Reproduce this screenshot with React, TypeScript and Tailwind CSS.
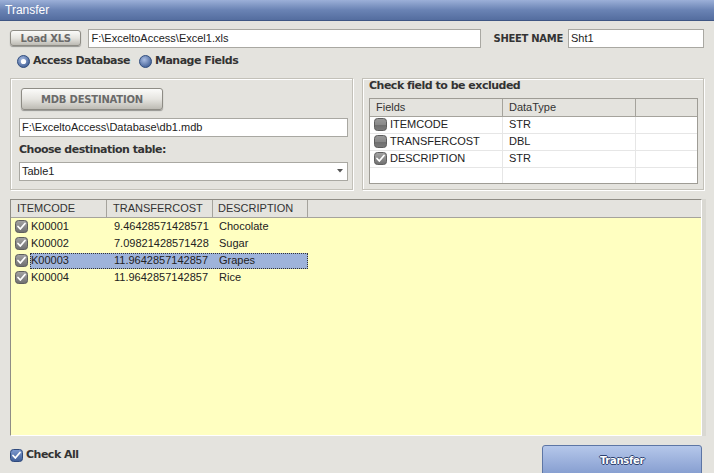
import React from "react";

const FONT = { fontFamily: '"Liberation Sans", Arial, sans-serif' };
const BOLD = { fontFamily: '"DejaVu Sans", Verdana, sans-serif' };

function CheckIcon({ checked, blue }: { checked: boolean; blue?: boolean }) {
  const id = blue ? "cb-blue" : checked ? "cb-gray" : "cb-off";
  return (
    <svg width="13" height="13" viewBox="0 0 13 13" className="shrink-0">
      <defs>
        <linearGradient id={id} x1="0" y1="0" x2="0" y2="1">
          {blue ? (
            <>
              <stop offset="0" stopColor="#7d9ad0" />
              <stop offset="1" stopColor="#3e5d96" />
            </>
          ) : checked ? (
            <>
              <stop offset="0" stopColor="#a4a4a4" />
              <stop offset="1" stopColor="#707070" />
            </>
          ) : (
            <>
              <stop offset="0" stopColor="#9a9a9a" />
              <stop offset="0.5" stopColor="#8a8a8a" />
              <stop offset="0.51" stopColor="#6e6e6e" />
              <stop offset="1" stopColor="#7c7c7c" />
            </>
          )}
        </linearGradient>
      </defs>
      <rect x="0.5" y="0.5" width="12" height="12" rx="3" fill={`url(#${id})`} stroke={blue ? "#2f4a7c" : "#5e5e5e"} strokeWidth="1" />
      {checked && (
        <path d="M3 6.5 L5.3 9 L10 3.5" fill="none" stroke="#ffffff" strokeWidth="1.8" strokeLinecap="round" strokeLinejoin="round" />
      )}
    </svg>
  );
}

function Radio({ on }: { on: boolean }) {
  const id = on ? "rd-on" : "rd-off";
  return (
    <svg width="13" height="13" viewBox="0 0 13 13" className="shrink-0">
      <defs>
        <radialGradient id={id} cx="0.4" cy="0.35" r="0.7">
          <stop offset="0" stopColor="#a9bde3" />
          <stop offset="1" stopColor="#3d5b92" />
        </radialGradient>
      </defs>
      <circle cx="6.5" cy="6.5" r="6" fill={`url(#${id})`} stroke="#34507f" strokeWidth="1" />
      {on && <circle cx="6.5" cy="6.5" r="2.6" fill="#ffffff" />}
    </svg>
  );
}

function GrayButton({ label, className }: { label: string; className: string }) {
  return (
    <div
      className={`flex items-center justify-center whitespace-nowrap rounded-[3px] border border-[#8e8c85] bg-gradient-to-b from-[#fbfbf9] via-[#e6e5e0] to-[#bdbbb4] shadow-[0_1px_1px_rgba(0,0,0,0.35)] text-[10px] font-bold text-[#6a6a6a] tracking-[-0.2px] ${className}`}
      style={BOLD}
    >
      {label}
    </div>
  );
}

function TextBox({ value, className }: { value: string; className: string }) {
  return (
    <div
      className={`flex items-center bg-white border border-[#a9a8a2] px-[2px] text-[11px] text-[#222222] whitespace-nowrap ${className}`}
      style={FONT}
    >
      {value}
    </div>
  );
}

const FIELD_ROWS = [
  { name: "ITEMCODE", type: "STR", checked: false },
  { name: "TRANSFERCOST", type: "DBL", checked: false },
  { name: "DESCRIPTION", type: "STR", checked: true },
];

const DATA = [
  { code: "K00001", cost: "9.46428571428571", desc: "Chocolate" },
  { code: "K00002", cost: "7.09821428571428", desc: "Sugar" },
  { code: "K00003", cost: "11.9642857142857", desc: "Grapes", selected: true },
  { code: "K00004", cost: "11.9642857142857", desc: "Rice" },
];

const LABEL = "text-[11px] font-bold text-[#333333] tracking-[-0.5px] whitespace-nowrap";

export default function App() {
  return (
    <div className="w-[714px] h-[473px] overflow-hidden bg-[#e4e3de] flex flex-col text-[#222222]" style={FONT}>
      {/* Title bar */}
      <div className="h-[21px] shrink-0 flex items-center px-[5px] bg-gradient-to-b from-[#9cb0d8] via-[#6a83b4] to-[#546d9f] border-b border-[#3f5683] text-white text-[12px]">
        Transfer
      </div>

      <div className="flex flex-col px-[10px]">
        {/* Row 1 */}
        <div className="mt-[8px] h-[18px] flex items-center">
          <GrayButton label="Load XLS" className="w-[72px] h-[16px]" />
          <TextBox value="F:\ExceltoAccess\Excel1.xls" className="ml-[7px] w-[395px] h-[19px]" />
          <div className="ml-[13px] text-[10px] font-bold text-[#333333] tracking-[-0.3px] whitespace-nowrap" style={BOLD}>
            SHEET NAME
          </div>
          <TextBox value="Sht1" className="ml-[5px] w-[137px] h-[19px]" />
        </div>

        {/* Row 2 */}
        <div className="mt-[6px] h-[17px] flex items-center pl-[7px]">
          <Radio on />
          <span className={`ml-[3px] ${LABEL}`} style={BOLD}>
            Access Database
          </span>
          <span className="ml-[9px]">
            <Radio on={false} />
          </span>
          <span className={`ml-[3px] ${LABEL}`} style={BOLD}>
            Manage Fields
          </span>
        </div>

        {/* Group boxes */}
        <div className="mt-[8px] h-[112px] flex gap-[9px]">
          <div className="w-[343px] h-full border border-[#c3c1b9] shadow-[inset_1px_1px_0_#ffffff,1px_1px_0_#ffffff] flex flex-col pl-[8px] pr-[5px]">
            <GrayButton label="MDB DESTINATION" className="mt-[9px] ml-[2px] w-[142px] h-[22px]" />
            <TextBox value="F:\ExceltoAccess\Database\db1.mdb" className="mt-[8px] w-[329px] h-[19px]" />
            <div className={`mt-[5px] ${LABEL}`} style={BOLD}>
              Choose destination table:
            </div>
            <div className="mt-[3px] w-[329px] h-[19px] flex items-center bg-white border border-[#a9a8a2] text-[11px]">
              <span className="flex-1 px-[2px]">Table1</span>
              <span className="w-[14px] flex items-center justify-center">
                <svg width="6" height="4" viewBox="0 0 6 4">
                  <path d="M0 0 H6 L3 3.5 Z" fill="#555555" />
                </svg>
              </span>
            </div>
          </div>

          <div className="w-[344px] h-full border border-[#c3c1b9] shadow-[inset_1px_1px_0_#ffffff,1px_1px_0_#ffffff] flex flex-col pl-[6px]">
            <div className={`-mt-[1px] ${LABEL}`} style={BOLD}>
              Check field to be excluded
            </div>
            <div className="mt-[3px] w-[329px] h-[86px] border border-[#9e9c95] bg-white flex flex-col text-[11px]">
              <div className="h-[18px] flex bg-[#e4e3de] border-b border-[#a5a39c] text-[#333333]">
                <div className="w-[133px] px-[6px] flex items-center border-r border-[#a5a39c]">Fields</div>
                <div className="w-[133px] px-[6px] flex items-center border-r border-[#a5a39c]">DataType</div>
                <div className="flex-1" />
              </div>
              {FIELD_ROWS.map((r) => (
                <div key={r.name} className="h-[17px] flex border-b border-[#e6e6e6]">
                  <div className="w-[133px] pl-[4px] flex items-center gap-[3px] border-r border-[#e6e6e6]">
                    <CheckIcon checked={r.checked} />
                    <span>{r.name}</span>
                  </div>
                  <div className="w-[133px] px-[6px] flex items-center border-r border-[#e6e6e6]">{r.type}</div>
                  <div className="flex-1" />
                </div>
              ))}
              <div className="flex-1 flex">
                <div className="w-[133px] border-r border-[#e6e6e6]" />
                <div className="w-[133px] border-r border-[#e6e6e6]" />
              </div>
            </div>
          </div>
        </div>

        {/* Data grid */}
        <div className="mt-[9px] w-[696px] h-[237px] flex">
          <div className="w-[694px] h-full border border-[#8f8d86] border-r-[#ffffff] border-b-[#ffffff] bg-[#ffffc1] flex flex-col text-[11px]">
            <div className="h-[18px] flex bg-[#e4e3de] border-b border-[#a5a39c] text-[#333333]">
              <div className="w-[96px] px-[6px] flex items-center border-r border-[#a5a39c]">ITEMCODE</div>
              <div className="w-[106px] px-[6px] flex items-center border-r border-[#a5a39c]">TRANSFERCOST</div>
              <div className="w-[95px] px-[5px] flex items-center border-r border-[#a5a39c]">DESCRIPTION</div>
              <div className="flex-1" />
            </div>
            {DATA.map((r) => (
              <div key={r.code} className="h-[17px] flex items-center">
                <div className="w-[19px] pl-[4px] flex items-center">
                  <CheckIcon checked />
                </div>
                <div
                  className={`w-[278px] h-[16px] flex items-center ${
                    r.selected ? "bg-[#9eb3da] outline outline-1 outline-dotted outline-[#333333] -outline-offset-1" : ""
                  }`}
                >
                  <div className="w-[83px] pl-[1px]">{r.code}</div>
                  <div className="w-[105px] pl-[1px]">{r.cost}</div>
                  <div className="flex-1 pl-[1px]">{r.desc}</div>
                </div>
              </div>
            ))}
          </div>
          <div className="w-[4px] h-full bg-[#d9d8d2]" />
        </div>

        {/* Bottom bar */}
        <div className="flex items-start">
          <div className="mt-[11px] flex items-center">
            <CheckIcon checked blue />
            <span className={`ml-[3px] ${LABEL}`} style={BOLD}>
              Check All
            </span>
          </div>
          <div className="flex-1" />
          <div
            className="mt-[9px] w-[160px] h-[30px] rounded-t-[3px] border border-[#5d76a5] bg-gradient-to-b from-[#b5c7ea] to-[#869ed0] flex items-center justify-center text-[10px] font-bold text-white tracking-[-0.3px]"
            style={{ ...BOLD, textShadow: "1px 0 0 #2c4170, -1px 0 0 #2c4170, 0 1px 0 #2c4170, 0 -1px 0 #2c4170" }}
          >
            Transfer
          </div>
          <div className="w-[2px]" />
        </div>
      </div>
    </div>
  );
}
